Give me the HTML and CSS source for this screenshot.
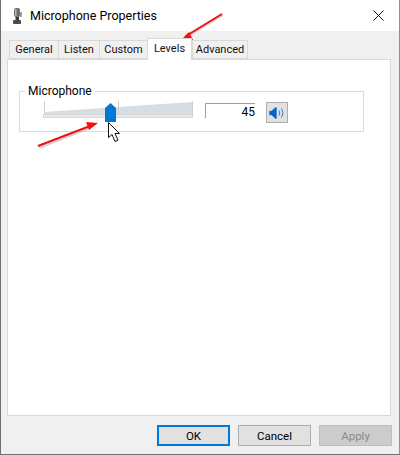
FILE: index.html
```html
<!DOCTYPE html>
<html lang="en">
<head>
  <meta charset="UTF-8">
  <title>Microphone Properties</title>
  <link rel="stylesheet" href="styles.css">
</head>
<body>

<div class="dialog">
  <header class="titlebar">
    <svg class="mic-icon" width="10" height="16" viewBox="0 0 10 16">
      <rect x="1" y="0" width="6" height="9" rx="2" fill="#6e6e6e"/>
      <rect x="2" y="1" width="1.500" height="7" fill="#b8b8b8"/>
      <rect x="7" y="4" width="2" height="5" fill="#a0a0a0"/>
      <rect x="2.500" y="9" width="3.500" height="3" fill="#3a3a3a"/>
      <rect x="0" y="12" width="8" height="4" rx="1" fill="#4c4c4c"/>
    </svg>
    <span class="title">Microphone Properties</span>
    <svg class="close-icon" width="11" height="11" viewBox="0 0 11 11">
      <path d="M.5.5l10 10M10.500.5l-10 10" stroke="#111" stroke-width="1" fill="none"/>
    </svg>
  </header>

  <div class="content">
    <nav class="tabs">
      <span class="tab">General</span>
      <span class="tab">Listen</span>
      <span class="tab">Custom</span>
      <span class="tab active">Levels</span>
      <span class="tab">Advanced</span>
    </nav>

    <main class="panel">
      <fieldset class="group">
        <legend>Microphone</legend>
        <div class="group-row">
          <div class="slider">
            <div class="ramp"></div>
            <div class="tick tick-left"></div>
            <div class="tick tick-mid"></div>
            <div class="tick tick-right"></div>
            <div class="track"></div>
            <svg class="thumb" width="11" height="19" viewBox="0 0 11 19">
              <path d="M5.500 0L11 5v14H0V5z" fill="#0078d7"/>
            </svg>
          </div>
          <div class="level-input">45</div>
          <button class="speaker">
            <svg width="16" height="14" viewBox="0 0 16 14">
              <path d="M0 4.500h2.500L6.500 1H8v12H6.500L2.500 9.500H0z" fill="#0a64c8" stroke="#fff" stroke-width=".5"/>
              <path d="M10 4.500q1.500 2.500 0 5M12.500 2.500q3 4.500 0 9" stroke="#2d7fdc" stroke-width="1" fill="none"/>
            </svg>
          </button>
        </div>
      </fieldset>
    </main>

    <footer class="buttons">
      <button class="btn default">OK</button>
      <button class="btn">Cancel</button>
      <button class="btn disabled">Apply</button>
    </footer>
  </div>

  <!-- annotations drawn on top of the screenshot -->
  <svg class="arrows" width="400" height="455" viewBox="0 0 400 455">
    <g class="arrow-shadow">
      <path d="M223 15L187 37" stroke="#8a8a8a" stroke-width="2" fill="none"/>
      <path d="M39 148L90 128" stroke="#8a8a8a" stroke-width="2" fill="none"/>
    </g>
    <path d="M222 14L186 36" stroke="#f01010" stroke-width="2" fill="none"/>
    <path d="M178 43L189 32l4 8z" fill="#f01010"/>
    <path d="M38 146L90 126" stroke="#f01010" stroke-width="2" fill="none"/>
    <path d="M98 123L86 122l3 8z" fill="#f01010"/>
  </svg>
  <svg class="cursor" width="14" height="21" viewBox="0 0 14 21">
    <path d="M1.500 .5v15l3.500-3 3 7 3-1.300-3-6.700h4.500z" fill="#fff" stroke="#111" stroke-width="1"/>
  </svg>
</div>

</body>
</html>
```

FILE: styles.css
```css
* {
  box-sizing: border-box;
}

html, body {
  margin: 0;
  padding: 0;
}

body {
  width: 400px;
  height: 455px;
  overflow: hidden;
  font-family: Roboto, "Open Sans", sans-serif;
  font-size: 11px;
  color: #000;
}

.dialog {
  position: relative;
  width: 400px;
  height: 455px;
  display: flex;
  flex-direction: column;
  border-left: 1px solid #707070;
  border-right: 1px solid #909090;
  border-bottom: 1px solid #707070;
  background-color: #f0f0f0;
}

/* title bar */
.titlebar {
  height: 31px;
  flex-shrink: 0;
  display: flex;
  align-items: center;
  background-color: #fff;
  padding: 0 15px 0 12px;
}

.mic-icon {
  margin-right: 7px;
}

.title {
  font-size: 12.500px;
  flex: 1;
}

/* tabs */
.content {
  flex: 1;
  display: flex;
  flex-direction: column;
  padding: 9px 7px 8px 6px;
}

.tabs {
  display: grid;
  grid-template-columns: 49px 41px 48px 45px 56px;
  justify-content: start;
  height: 19px;
  padding-left: 2px;
  position: relative;
  z-index: 1;
}

.tab {
  height: 19px;
  text-align: center;
  line-height: 18px;
  background-color: #f0f0f0;
  border: 1px solid #d9d9d9;
  border-right: none;
  color: #111;
}

.tab:nth-child(5) {
  border-right: 1px solid #d9d9d9;
}

.tab.active {
  height: 22px;
  margin-top: -2px;
  background-color: #fff;
  border-bottom: none;
  border-right: 1px solid #d9d9d9;
  line-height: 19px;
}

.panel {
  height: 357px;
  width: 384px;
  background-color: #fff;
  border: 1px solid #d9d9d9;
  padding: 24px 26px 0 11px;
}

/* level group */
.group {
  height: 48px;
  margin: 0;
  padding: 0;
  border: 1px solid #dcdcdc;
  min-width: 0;
}

.group legend {
  margin-left: 5px;
  padding: 0 3px;
  font-size: 12px;
  line-height: 14px;
}

.group-row {
  display: flex;
  align-items: flex-start;
  padding-left: 23px;
}

.slider {
  position: relative;
  width: 150px;
  height: 27px;
  margin-top: 3px;
  flex-shrink: 0;
}

.ramp {
  position: absolute;
  left: 1px;
  top: 1px;
  width: 148px;
  height: 12px;
  background-color: #d6dde4;
  clip-path: polygon(0 10px, 100% 0, 100% 100%, 0 100%);
}

.tick {
  position: absolute;
  top: 0;
  width: 1px;
  height: 13px;
  background-color: #cfcfcf;
}

.tick-left {
  left: 1px;
}

.tick-mid {
  left: 75px;
}

.tick-right {
  left: 149px;
}

.track {
  position: absolute;
  left: 0;
  top: 13px;
  width: 150px;
  height: 4px;
  background-color: #e7eaea;
  border: 1px solid #d6d6d6;
}

.thumb {
  position: absolute;
  left: 62px;
  top: 2px;
}

.level-input {
  width: 50px;
  height: 15px;
  margin: 5px 0 0 12px;
  border-top: 1px solid #a0a0a0;
  border-left: 1px solid #a0a0a0;
  text-align: right;
  line-height: 16px;
  font-size: 12px;
}

.speaker {
  width: 22px;
  height: 21px;
  margin: 4px 0 0 11px;
  padding: 0;
  display: flex;
  align-items: center;
  justify-content: center;
  background-color: #e1e1e1;
  border: 1px solid #adadad;
}

/* bottom buttons */
.buttons {
  display: flex;
  justify-content: flex-end;
  gap: 8px;
  margin-top: 9px;
}

.btn {
  width: 73px;
  height: 21px;
  padding: 0;
  font-family: inherit;
  font-size: 11.500px;
  color: #000;
  background-color: #e1e1e1;
  border: 1px solid #adadad;
}

.btn.default {
  border: 2px solid #0078d7;
}

.btn.disabled {
  color: #8a8a8a;
  background-color: #ccc;
  border-color: #bfbfbf;
}

/* annotations */
.arrows {
  position: absolute;
  left: -1px;
  top: 0;
  pointer-events: none;
}

.arrow-shadow {
  opacity: .35;
}

.cursor {
  position: absolute;
  left: 106px;
  top: 122px;
}
```
